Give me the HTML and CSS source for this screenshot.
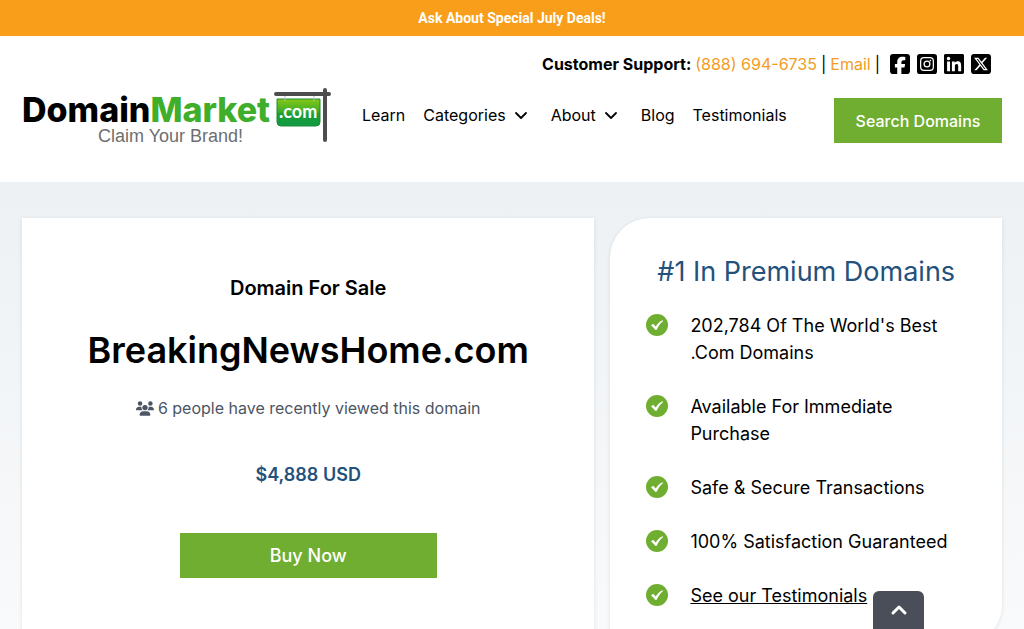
FILE: index.html
```
<!DOCTYPE html>
<html lang="en">
<head>
    <meta charset="utf-8">
    <meta name="viewport" content="width=device-width, initial-scale=1">
    <title>BreakingNewsHome.com | DomainMarket.com</title>
    <link rel="stylesheet" href="styles.css">
</head>
<body>
    <svg class="sprite" aria-hidden="true">
        <symbol id="check" viewBox="0 0 22 22">
            <circle cx="11" cy="11" r="11" fill="#70ae31"/>
            <path d="M5 11.4l2.2-1.6 2.5 2.6C11.600 9.500 13.600 7.500 16.600 6.200l.5.8C14.500 9.200 12.300 12 10.700 15.800H9C8 14 6.700 12.600 5 11.400z" fill="#fff"/>
        </symbol>
        <symbol id="chevron" viewBox="0 0 20 20">
            <path d="M5 8l5 5 5-5" fill="none" stroke="currentColor" stroke-width="1.8" stroke-linecap="round" stroke-linejoin="round"/>
        </symbol>
    </svg>

    <div class="promo">Ask About Special July Deals!</div>

    <header class="header">
        <div class="support">
            <strong>Customer Support:</strong>
            <a href="tel:8886946735">(888) 694-6735</a>
            <span>|</span>
            <a href="#email">Email</a>
            <span>|</span>
            <div class="social">
                <a href="#facebook" aria-label="Facebook">
                    <svg viewBox="0 32 448 448"><path d="M64 32C28.7 32 0 60.7 0 96V416c0 35.3 28.7 64 64 64h98.2V334.2H109.4V256h52.8V222.3c0-87.1 39.4-127.5 125-127.5c16.2 0 44.2 3.2 55.7 6.4V172c-6-.6-16.5-1-29.6-1c-42 0-58.2 15.9-58.2 57.2V256h83.6l-14.4 78.2H255V480H384c35.3 0 64-28.7 64-64V96c0-35.3-28.7-64-64-64H64z"/></svg>
                </a>
                <a href="#instagram" aria-label="Instagram">
                    <svg viewBox="0 0 448 448">
                        <rect width="448" height="448" rx="64"/>
                        <rect x="82" y="82" width="284" height="284" rx="74" fill="none" stroke="#fff" stroke-width="28"/>
                        <circle cx="224" cy="224" r="65" fill="none" stroke="#fff" stroke-width="28"/>
                        <circle cx="300" cy="148" r="18" fill="#fff"/>
                    </svg>
                </a>
                <a href="#linkedin" aria-label="LinkedIn">
                    <svg viewBox="0 32 448 448"><path d="M416 32H31.9C14.3 32 0 46.5 0 64.3v383.4C0 465.5 14.3 480 31.9 480H416c17.6 0 32-14.5 32-32.3V64.3c0-17.8-14.4-32.3-32-32.3zM135.4 416H69V202.2h66.5V416zm-33.2-243c-21.3 0-38.5-17.3-38.5-38.5S80.9 96 102.200 96c21.2 0 38.5 17.3 38.5 38.5 0 21.3-17.2 38.5-38.5 38.5zm282.1 243h-66.4V312c0-24.8-.5-56.7-34.5-56.7-34.6 0-39.9 27-39.9 54.9V416h-66.4V202.2h63.7v29.2h.9c8.9-16.8 30.6-34.5 62.9-34.5 67.2 0 79.7 44.3 79.7 101.9V416z"/></svg>
                </a>
                <a href="#x" aria-label="X">
                    <svg viewBox="0 32 448 448"><path d="M64 32C28.7 32 0 60.7 0 96V416c0 35.3 28.7 64 64 64H384c35.3 0 64-28.7 64-64V96c0-35.3-28.7-64-64-64H64zm297.1 84L257.3 234.6 379.4 396H283.8L209 298.1 123.3 396H75.8l111-126.9L69.7 116h98l67.7 89.5L313.6 116h47.5zM323.3 367.6L153.4 142.9H125.1L296.9 367.6h26.3z"/></svg>
                </a>
            </div>
        </div>

        <div class="main-bar">
            <a class="logo" href="#home" aria-label="DomainMarket.com">
                <svg viewBox="0 0 310 56">
                    <defs>
                        <linearGradient id="sign" x1="0" y1="0" x2="0" y2="1">
                            <stop offset="0" stop-color="#86c814"/>
                            <stop offset="0.45" stop-color="#3fae29"/>
                            <stop offset="0.55" stop-color="#1c9d33"/>
                            <stop offset="1" stop-color="#0f9a45"/>
                        </linearGradient>
                    </defs>
                    <text class="logo-name" x="0" y="35">Domain<tspan class="logo-market">Market</tspan></text>
                    <text class="logo-tag" x="76" y="55">Claim Your Brand!</text>
                    <path d="M255 12h43v23q0 4-4 4h-35q-4 0-4-4z" fill="url(#sign)" stroke="#1f8a35" stroke-width="1"/>
                    <path d="M263 8v6M292 8v6" stroke="#bbb" stroke-width="1"/>
                    <text class="logo-com" x="257" y="31">.com</text>
                    <path d="M254 7h53M303 3v50" stroke="#4d4d4f" stroke-width="4" stroke-linecap="round"/>
                </svg>
            </a>
            <nav class="nav">
                <a href="#learn">Learn</a>
                <a href="#categories">Categories <svg><use href="#chevron"/></svg></a>
                <a href="#about">About <svg><use href="#chevron"/></svg></a>
                <a href="#blog">Blog</a>
                <a href="#testimonials">Testimonials</a>
            </nav>
            <button class="btn search-btn" type="button">Search Domains</button>
        </div>
    </header>

    <main class="content">
        <section class="card sale">
            <h2>Domain For Sale</h2>
            <h1>BreakingNewsHome.com</h1>
            <p class="viewers">
                <svg viewBox="0 0 640 512"><path d="M144 0a80 80 0 1 1 0 160A80 80 0 1 1 144 0zM512 0a80 80 0 1 1 0 160A80 80 0 1 1 512 0zM0 298.7C0 239.8 47.8 192 106.700 192h42.7c15.9 0 31 3.5 44.6 9.7c-1.3 7.2-1.9 14.7-1.9 22.3c0 38.2 16.8 72.5 43.3 96H21.3C9.6 320 0 310.4 0 298.7zM405.3 320c26.6-23.5 43.3-57.8 43.3-96c0-7.6-.7-15-1.9-22.3c13.6-6.3 28.7-9.7 44.6-9.7h42.7C592.2 192 640 239.8 640 298.7c0 11.8-9.6 21.3-21.3 21.3H405.3zM224 224a96 96 0 1 1 192 0 96 96 0 1 1 -192 0zM128 485.3C128 411.7 187.7 352 261.3 352H378.700C452.3 352 512 411.7 512 485.3c0 14.7-11.9 26.7-26.7 26.7H154.7c-14.7 0-26.7-11.9-26.7-26.7z"/></svg>
                6 people have recently viewed this domain
            </p>
            <p class="price">$4,888 USD</p>
            <button class="btn buy-btn" type="button">Buy Now</button>
        </section>

        <aside class="card premium">
            <h2>#1 In Premium Domains</h2>
            <ul>
                <li><svg><use href="#check"/></svg><span>202,784 Of The World's Best .Com Domains</span></li>
                <li><svg><use href="#check"/></svg><span>Available For Immediate Purchase</span></li>
                <li><svg><use href="#check"/></svg><span>Safe &amp; Secure Transactions</span></li>
                <li><svg><use href="#check"/></svg><span>100% Satisfaction Guaranteed</span></li>
                <li><svg><use href="#check"/></svg><a href="#testimonials">See our Testimonials</a></li>
            </ul>
        </aside>
    </main>

    <button class="to-top" type="button" aria-label="Back to top">
        <svg viewBox="0 0 20 20"><path d="M4 13l6-6 6 6" fill="none" stroke="#fff" stroke-width="3" stroke-linecap="round" stroke-linejoin="round"/></svg>
    </button>
</body>
</html>
```
FILE: styles.css
```
* {
    box-sizing: border-box;
}

body {
    margin: 0;
    font-family: Inter, "Liberation Sans", sans-serif;
    font-size: 16px;
    line-height: 24px;
    color: #000;
    background-color: #fff;
}

h1, h2, p, ul {
    margin: 0;
    padding: 0;
}

.sprite {
    display: none;
}

.promo {
    padding: 6px 16px;
    background-color: #f89e1b;
    color: #fff;
    font-family: Roboto, sans-serif;
    font-size: 14px;
    font-weight: 700;
    text-align: center;
}

/* header */
.header {
    padding: 16px 22px 39px;
}

.support {
    display: flex;
    justify-content: flex-end;
    align-items: center;
    gap: 4px;
    margin-bottom: 11px;
    padding-right: 11px;
}

.support a {
    color: #f39c1f;
    text-decoration: none;
}

.social {
    display: flex;
    gap: 7px;
    margin-left: 6px;
}

.social svg {
    display: block;
    width: 20px;
    height: 20px;
    fill: #000;
}

.main-bar {
    display: flex;
    align-items: center;
}

.logo svg {
    display: block;
    width: 310px;
    height: 56px;
    overflow: visible;
}

.logo-name {
    font: 800 34px Inter, sans-serif;
}

.logo-market {
    fill: #3fae2a;
}

.logo-tag {
    font: 18px "Liberation Sans", sans-serif;
    fill: #6d6e70;
}

.logo-com {
    font: 700 18px Lato, sans-serif;
    fill: #fff;
}

.nav {
    display: flex;
    gap: 18px;
    margin-left: 30px;
}

.nav a {
    display: flex;
    align-items: center;
    gap: 5px;
    color: #000;
    text-decoration: none;
}

.nav svg {
    width: 20px;
    height: 20px;
    margin-right: 2px;
}

.btn {
    height: 45px;
    border: none;
    background-color: #70ae31;
    color: #fff;
    font-family: inherit;
    font-weight: 500;
    cursor: pointer;
}

.search-btn {
    align-self: flex-end;
    width: 168px;
    margin-left: auto;
    padding: 0;
    font-size: 16px;
}

/* main area */
.content {
    display: grid;
    grid-template-columns: 19fr 13fr;
    gap: 16px;
    padding: 36px 22px;
    background: linear-gradient(#edf1f4, #fafbfc);
}

.card {
    background-color: #fff;
    box-shadow: 0 1px 4px rgba(0, 0, 0, 0.1);
}

.sale {
    display: flex;
    flex-direction: column;
    align-items: center;
    padding: 58px 36px;
    text-align: center;
}

.sale h2 {
    font-size: 20px;
    font-weight: 600;
}

.sale h1 {
    margin-top: 28px;
    font-size: 36px;
    font-weight: 600;
    line-height: 44px;
}

.viewers {
    display: flex;
    align-items: center;
    gap: 4px;
    margin-top: 24px;
    color: #4b5563;
}

.viewers svg {
    width: 18px;
    height: 15px;
    fill: #4b5563;
}

.price {
    margin-top: 43px;
    color: #23517c;
    font-size: 18px;
    font-weight: 600;
}

.buy-btn {
    width: 257px;
    margin-top: 46px;
    font-size: 18px;
}

.premium {
    padding: 36px;
    border-radius: 40px 0;
}

.premium h2 {
    color: #23517c;
    font-size: 27px;
    font-weight: 400;
    line-height: 36px;
    text-align: center;
}

.premium ul {
    display: grid;
    gap: 27px;
    margin-top: 22px;
    list-style: none;
    font-size: 18px;
    line-height: 27px;
}

.premium li {
    display: flex;
    gap: 22px;
}

.premium li svg {
    flex: none;
    width: 22px;
    height: 22px;
    margin-top: 2px;
}

.premium a {
    color: #000;
}

.to-top {
    position: fixed;
    right: 100px;
    bottom: 0;
    display: flex;
    justify-content: center;
    align-items: center;
    width: 51px;
    height: 38px;
    padding: 0;
    border: none;
    border-radius: 6px 6px 0 0;
    background-color: #494e58;
    cursor: pointer;
}

.to-top svg {
    width: 20px;
    height: 20px;
}
```
